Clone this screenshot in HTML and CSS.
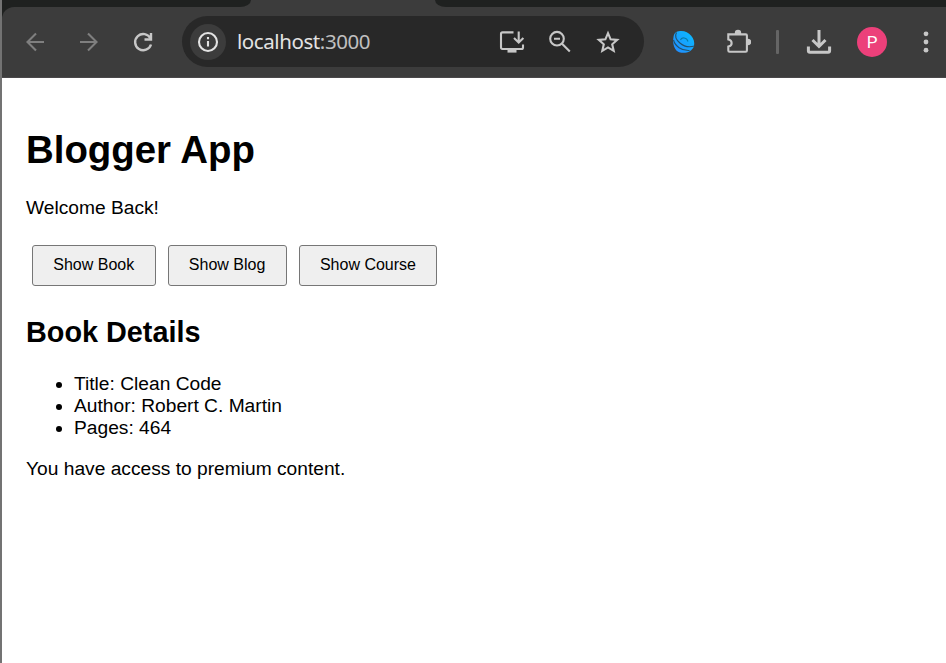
FILE: index.html
```html
<!DOCTYPE html>
<html lang="en">
<head>
<meta charset="utf-8">
<title>Blogger App</title>
<link rel="stylesheet" href="styles.css">
</head>
<body>
<div class="window">
  <header class="chrome">
    <div class="tabs"><div class="tab-rest left"></div><div class="tab-rest right"></div></div>
    <div class="toolbar">
      <div class="nav">
        <svg class="icon dim" viewBox="0 0 26 26"><path d="M22 13H5.500M14 4.500L5.500 13l8.500 8.500"/></svg>
        <svg class="icon dim" viewBox="0 0 26 26"><path d="M4 13h16.500M12 4.500l8.500 8.500-8.500 8.500"/></svg>
        <svg class="icon" viewBox="0 0 26 26"><path class="bold" d="M20.500 9.500A8.100 8.100 0 1 0 21 15.500"/><path class="bold" d="M21 4v6.500h-6.500"/></svg>
      </div>
      <div class="address">
        <span class="info"><svg class="icon light" viewBox="0 0 26 26"><circle cx="13" cy="13" r="9"/><path d="M13 12v5.500M13 8v2.200"/></svg></span>
        <span class="url">localhost<span class="port">:3000</span></span>
        <div class="actions">
          <svg class="icon" viewBox="0 0 26 26"><path d="M14.500 3.400H3.500Q2 3.400 2 5V18.300Q2 20 3.500 20H22.500Q24 20 24 18.500V15.500M19.700 2.500V13M15 9l4.700 4.500L24.400 9"/><path class="solid" d="M8.500 20h9v3.600h-9z"/></svg>
          <svg class="icon" viewBox="0 0 26 26"><circle cx="10" cy="9.700" r="6.800"/><path d="M7 9.700h6M14.800 14.500l8 8"/></svg>
          <svg class="icon" viewBox="0 0 26 26"><path d="M13 4.200l2.600 6.100 6.600.6-5 4.400 1.500 6.500-5.700-3.400-5.700 3.400 1.500-6.500-5-4.400 6.600-.6z"/></svg>
        </div>
      </div>
      <svg class="icon extension" viewBox="0 0 26 26">
        <defs><linearGradient id="dish" x1="0" y1="1" x2="1" y2="0"><stop offset="0" stop-color="#2488ff"/><stop offset="1" stop-color="#08c0ff"/></linearGradient></defs>
        <path fill="url(#dish)" d="M2.500 8C1 15 4 22.500 9 23.500c6 1 12-.5 14-6.500C25 9 17 1 9 2 5 2.200 3 4.500 2.500 8z"/>
        <path class="groove" d="M5.500 3.500C2 10 12 20.500 23.500 17"/>
        <path class="groove" d="M2.500 11c1.500 6 8 11 16 10.500"/>
        <path class="groove thin" d="M9.500 11c1-3.500 6.500-2.500 7.500 1.500"/>
      </svg>
      <svg class="icon puzzle" viewBox="0 0 26 26"><path d="M3.500 5.400h17.200q1.200 0 1.200 1.200v15q0 1.200-1.200 1.200H4.500q-1.200 0-1.200-1.200v-4C8 16.500 7.500 11.300 3.300 10.500V5.400z"/><path class="solid" d="M9.800 5.500V4a3.200 3.200 0 0 1 6.400 0v1.500zM22 9.800h1a3.200 3.200 0 0 1 0 6.400h-1z"/></svg>
      <span class="divider"></span>
      <svg class="icon download" viewBox="0 0 26 26"><path class="heavy" d="M13 1v16M6.500 11l6.500 6.500 6.500-6.500M2.400 17.500v4.200q0 1.500 1.500 1.500h18.200q1.500 0 1.500-1.500v-4.200"/></svg>
      <span class="avatar">P</span>
      <svg class="icon more" viewBox="0 0 26 26"><g class="solid"><circle cx="13" cy="4.800" r="2.400"/><circle cx="13" cy="13" r="2.400"/><circle cx="13" cy="21.200" r="2.400"/></g></svg>
    </div>
  </header>
  <main class="page">
    <h1>Blogger App</h1>
    <p>Welcome Back!</p>
    <div class="buttons"><button>Show Book</button><button>Show Blog</button><button>Show Course</button></div>
    <h2>Book Details</h2>
    <ul><li>Title: Clean Code</li><li>Author: Robert C. Martin</li><li>Pages: 464</li></ul>
    <p class="access">You have access to premium content.</p>
  </main>
</div>
</body>
</html>
```
FILE: styles.css
```css
* { box-sizing: border-box; }
body { margin: 0; background: #fff; overflow: hidden; }
.window { height: 663px; border-left: 2px solid #737373; background: #fff; }
.chrome { height: 78px; background: #1f2120; }
.tabs { display: flex; justify-content: space-between; height: 7px; background: #3c3c3c; }
.tab-rest { background: #1f2120; }
.tab-rest.left { width: 249px; border-bottom-right-radius: 11px 7px; }
.tab-rest.right { width: 511px; border-bottom-left-radius: 11px 7px; }
.toolbar { display: flex; align-items: center; height: 71px; padding: 0 6px 1px 20px; background: #3c3c3c; border-bottom: 1px solid #4a484a; border-top-left-radius: 12px; }
.icon { display: block; flex: none; width: 26px; height: 26px; fill: none; stroke: #c7c7c7; stroke-width: 2.1; }
.dim { stroke: #7f7f7f; }
.light { stroke: #e3e3e3; }
.bold { stroke-width: 2.400; }
.heavy { stroke-width: 3; }
.solid { fill: #c7c7c7; stroke: none; }
.nav { display: flex; gap: 28px; width: 134px; margin-right: 26px; }
.address { display: flex; align-items: center; width: 462px; height: 51px; padding: 0 23px 0 8px; border-radius: 26px; background: #282828; }
.info { display: flex; align-items: center; justify-content: center; width: 36px; height: 36px; border-radius: 50%; background: #3c3c3c; }
.url { margin: 0 0 2px 11px; color: #e3e3e3; font: 20.5px/28px "Noto Sans", sans-serif; letter-spacing: -.42px; }
.port { color: #c0c0c0; }
.actions { display: flex; gap: 22px; margin-left: auto; }
.extension { margin-left: 27px; stroke: none; }
.groove { stroke: #24506b; stroke-width: 1.1; }
.thin { stroke: #087ba8; }
.puzzle { margin-left: 28px; }
.divider { width: 3px; height: 24px; margin-left: 25px; border-radius: 1px; background: #656565; }
.download { margin-left: 27px; }
.avatar { width: 30px; height: 30px; margin-left: 25px; border-radius: 50%; background: #ec407a; color: #fff; font: 17px/30px Roboto, sans-serif; text-align: center; }
.more { margin-left: 26px; }
.page { padding: 50px 24px 0; color: #000; font: 19.2px/22px "Liberation Sans", Arial, sans-serif; }
h1 { margin: 0; font-size: 38.4px; line-height: 44px; }
p { margin: 25px 0 0; }
.buttons { display: flex; gap: 12px; margin: 26px 6px 0; }
button { height: 41px; padding: 0 20.300px 1px; border: 1px solid #767676; border-radius: 3px; background: #efefef; color: #000; font: 16px/20px "Liberation Sans", Arial, sans-serif; }
h2 { margin: 29px 0 0; font-size: 28.8px; line-height: 34px; }
ul { margin: 24px 0 0; padding-left: 48px; }
.access { margin-top: 19px; }
```
